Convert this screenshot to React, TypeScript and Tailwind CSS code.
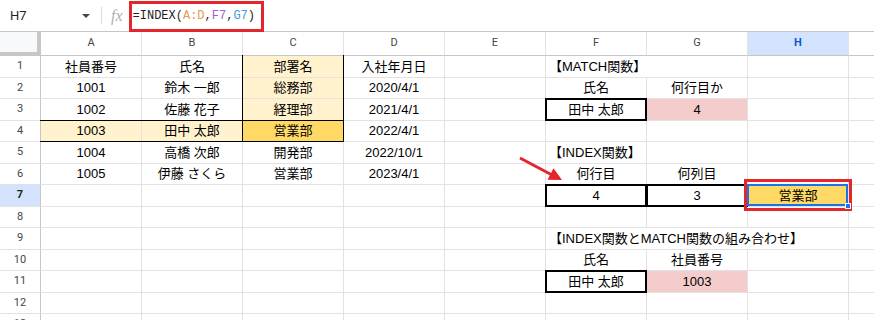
import React from "react";

type Cell = {
  v: string;
  bg?: string;
  left?: boolean;
  noRight?: boolean;
  box?: string;
  selected?: boolean;
};

const COLS = ["A", "B", "C", "D", "E", "F", "G", "H", "I"];
const ROWS = [1, 2, 3, 4, 5, 6, 7, 8, 9, 10, 11, 12, 13];

const thick = "border-2 border-black";

const cells: Record<string, Cell> = {
  A1: { v: "社員番号" },
  B1: { v: "氏名" },
  C1: { v: "部署名", bg: "bg-[#fff2cc]", box: "border-x border-black" },
  D1: { v: "入社年月日" },
  A2: { v: "1001" },
  B2: { v: "鈴木 一郎" },
  C2: { v: "総務部", bg: "bg-[#fff2cc]", box: "border-x border-black" },
  D2: { v: "2020/4/1" },
  A3: { v: "1002" },
  B3: { v: "佐藤 花子" },
  C3: { v: "経理部", bg: "bg-[#fff2cc]", box: "border-x border-black" },
  D3: { v: "2021/4/1" },
  A4: { v: "1003", bg: "bg-[#fff2cc]", box: "border-y border-black" },
  B4: { v: "田中 太郎", bg: "bg-[#fff2cc]", box: "border-y border-black" },
  C4: { v: "営業部", bg: "bg-[#ffd966]", box: "border border-black" },
  D4: { v: "2022/4/1" },
  A5: { v: "1004" },
  B5: { v: "高橋 次郎" },
  C5: { v: "開発部" },
  D5: { v: "2022/10/1" },
  A6: { v: "1005" },
  B6: { v: "伊藤 さくら" },
  C6: { v: "営業部" },
  D6: { v: "2023/4/1" },

  F1: { v: "【MATCH関数】", left: true, noRight: true },
  F2: { v: "氏名" },
  G2: { v: "何行目か" },
  F3: { v: "田中 太郎", box: thick },
  G3: { v: "4", bg: "bg-[#f4cccc]" },
  F5: { v: "【INDEX関数】", left: true },
  F6: { v: "何行目" },
  G6: { v: "何列目" },
  F7: { v: "4", box: thick },
  G7: { v: "3", box: thick },
  H7: { v: "営業部", bg: "bg-[#ffd966]", selected: true },
  F9: { v: "【INDEX関数とMATCH関数の組み合わせ】", left: true, noRight: true },
  G9: { v: "", noRight: true },
  F10: { v: "氏名" },
  G10: { v: "社員番号" },
  F11: { v: "田中 太郎", box: thick },
  G11: { v: "1003", bg: "bg-[#f4cccc]" },
};

function FormulaBar() {
  return (
    <div className="relative flex h-[31px] items-center bg-white">
      <div className="flex w-[101px] items-center justify-between pl-[10px] pr-[11px] font-['Roboto',sans-serif] text-[13px] text-[#1f1f1f]">
        <span>H7</span>
        <span className="h-0 w-0 border-x-[4px] border-t-[4px] border-x-transparent border-t-[#444746]" />
      </div>
      <div className="h-[17px] w-px bg-[#dadce0]" />
      <span className="ml-[9px] font-['Liberation_Serif',serif] text-[16px] italic text-[#b0b0b0]">fx</span>
      <span className="ml-[10px] font-['Liberation_Mono',monospace] text-[12px] text-[#1f1f1f]">
        =INDEX(<span className="text-[#e49c4f]">A:D</span>,<span className="text-[#a45ec6]">F7</span>,
        <span className="text-[#3d9fd4]">G7</span>)
      </span>
      {/* annotation box */}
      <div className="absolute left-[129px] top-[1px] h-[31px] w-[135px] border-[3px] border-[#e3262b]" />
    </div>
  );
}

function GridCell({ id }: { id: string }) {
  const c = cells[id];
  return (
    <div
      className={`relative flex items-center border-b border-[#e2e2e2] ${
        c?.noRight ? "" : "border-r"
      } ${c?.bg ?? "bg-white"} ${c?.left ? "justify-start pl-[3px]" : "justify-center"}`}
    >
      {c?.v && (
        <span className="relative z-20 whitespace-nowrap text-[13px] leading-none text-black">{c.v}</span>
      )}
      {c?.box && <span className={`absolute -left-px -top-px -right-px -bottom-px z-10 ${c.box}`} />}
      {c?.selected && (
        <>
          <span className="absolute -left-px -top-px right-0 bottom-0 z-10 border-2 border-[#1a73e8]" />
          <span className="absolute -bottom-[3px] -right-[3px] z-20 h-[6px] w-[6px] border border-white bg-[#1a73e8]" />
          <span className="absolute -left-[4px] -top-[6px] -right-[4px] -bottom-[5px] z-10 border-[3px] border-[#e3262b]" />
        </>
      )}
    </div>
  );
}

export default function App() {
  return (
    <div className="relative h-[320px] w-[874px] overflow-hidden bg-white font-['Liberation_Sans','Noto_Sans_CJK_JP',sans-serif]">
      <FormulaBar />

      <div className="grid grid-cols-[41px_repeat(9,101px)] grid-rows-[24px_repeat(13,21.5px)] border-t border-[#c4c7c5]">
        {/* corner */}
        <div className="border-b-[4px] border-r-[4px] border-[#c7c7c7] bg-[#f8f9fa]" />
        {COLS.map((col) => (
          <div
            key={col}
            className={`flex items-center justify-center border-b border-r border-b-[#c4c7c5] border-r-[#e2e2e2] font-['Roboto',sans-serif] text-[11px] ${
              col === "H" ? "bg-[#d3e3fd] font-bold text-[#0b57d0]" : "bg-white text-[#444746]"
            }`}
          >
            {col === "I" ? "" : col}
          </div>
        ))}

        {ROWS.map((r) => (
          <React.Fragment key={r}>
            <div
              className={`flex items-center justify-center border-b border-r border-b-[#e2e2e2] border-r-[#c4c7c5] font-['Roboto',sans-serif] text-[11px] ${
                r === 7 ? "bg-[#d3e3fd] font-bold text-[#1f1f1f]" : "bg-white text-[#444746]"
              }`}
            >
              {r}
            </div>
            {COLS.map((col) => (
              <GridCell key={col + r} id={col + r} />
            ))}
          </React.Fragment>
        ))}
      </div>

      {/* red arrow */}
      <svg className="pointer-events-none absolute left-0 top-0" width="874" height="320">
        <line x1="520" y1="158" x2="552" y2="175" stroke="#e3262b" strokeWidth="3" />
        <polygon points="562,180 547.5,179.8 553.5,168.2" fill="#e3262b" />
      </svg>
    </div>
  );
}
